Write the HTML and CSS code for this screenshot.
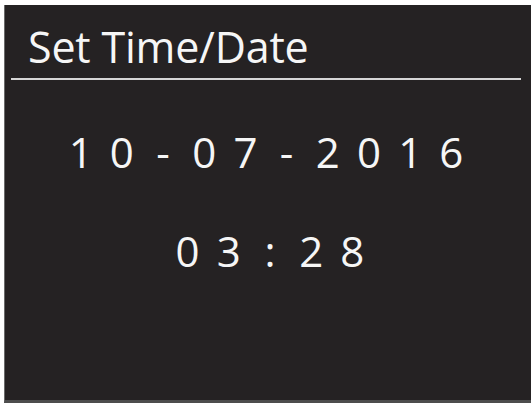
FILE: index.html
```html
<!DOCTYPE html>
<html>
<head>
<meta charset="utf-8">
<link rel="stylesheet" href="styles.css">
</head>
<body>
<div class="screen">
  <div class="title">Set Time/Date</div>
  <div class="rule"></div>
  <div class="row date">
    <span class="cell">1</span><span class="cell">0</span><span class="cell">-</span><span class="cell">0</span><span class="cell">7</span><span class="cell">-</span><span class="cell">2</span><span class="cell">0</span><span class="cell">1</span><span class="cell">6</span>
  </div>
  <div class="row time">
    <span class="cell">0</span><span class="cell">3</span><span class="cell">:</span><span class="cell">2</span><span class="cell">8</span>
  </div>
</div>
</body>
</html>
```
FILE: styles.css
```css
html, body {
  margin: 0;
  padding: 0;
  background: #ffffff;
}
body {
  width: 531px;
  height: 403px;
  overflow: hidden;
  font-family: "Open Sans", "DejaVu Sans", sans-serif;
}
.screen {
  margin: 5px 0 0 4px;
  height: 395px;
  background: #252223;
  border-left: 1px solid #6a6a6a;
  border-bottom: 3px solid #4d4d4d;
  color: #f6f6f6;
  display: flex;
  flex-direction: column;
}
.title {
  font-size: 43px;
  font-weight: 500;
  line-height: 42px;
  padding: 21px 0 0 23px;
  letter-spacing: -0.2px;
}
.rule {
  height: 2px;
  background: #d6d6d6;
  margin: 10px 10px 0 6px;
}
.row {
  display: flex;
  justify-content: center;
  font-size: 42px;
  font-weight: 500;
  line-height: 42px;
}
.date {
  margin-top: 51px;
  padding-right: 4px;
}
.time {
  margin-top: 57px;
  padding-left: 4px;
}
.cell {
  width: 41.2px;
  text-align: center;
}
```
